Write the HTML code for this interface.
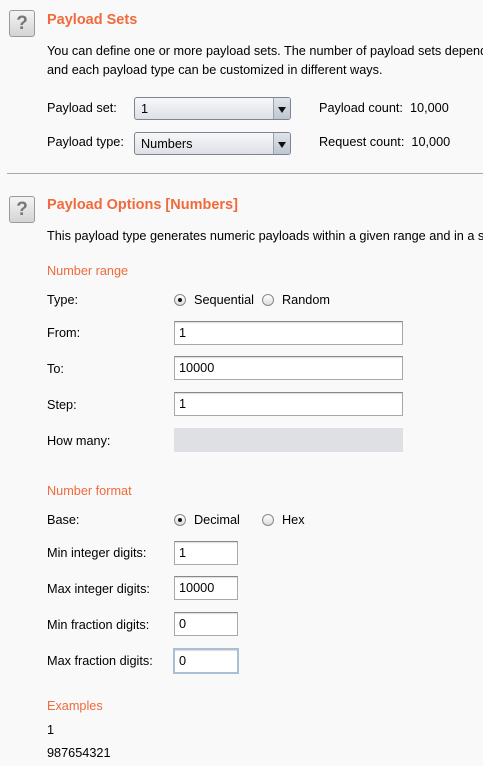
<!DOCTYPE html>
<html><head><style>
body{margin:0;width:483px;height:766px;overflow:hidden;background:#f9f9f9;font-family:"Liberation Sans",sans-serif;font-size:12.7px;color:#000;position:relative}
.a{position:absolute;white-space:nowrap;line-height:15px}
.t{color:#f06a3c;font-weight:bold;font-size:14.5px;line-height:18px}
.o{color:#f06a3c}
.q{position:absolute;left:9px;width:24px;height:25px;border:1px solid #9a9a9a;border-radius:3px;background:linear-gradient(#f4f4f4,#d4d4d4);color:#777;font-weight:bold;font-size:19px;text-align:center;line-height:25px}
.in{position:absolute;left:174px;width:223px;height:22px;border:1px solid #a8a8a8;border-top-color:#888;background:#fff;box-shadow:inset 0 2px 1px -1px #ddd;padding-left:4px;line-height:22px;box-sizing:content-box}
.sm{width:58px}
.sel{position:absolute;left:134px;width:157px;height:23px;border:1px solid #7d8591;border-radius:3px;background:linear-gradient(#f8f8fa,#dde0e6);line-height:22px;padding-left:6px;box-sizing:border-box}
.sel::after{content:"";position:absolute;right:0;top:0;width:16px;height:21px;border-left:1px solid #9aa2ae;background:linear-gradient(#dfe4ea,#bfc6d0);border-radius:0 2px 2px 0}
.sel b{position:absolute;right:4px;top:9px;width:0;height:0;border-left:4px solid transparent;border-right:4px solid transparent;border-top:6px solid #111;z-index:2}
.r{position:absolute;width:12px;height:12px;border:1px solid #888;border-radius:50%;background:linear-gradient(#fff,#dcdcdc);box-sizing:border-box}
.r.on::after{content:"";position:absolute;left:3px;top:3px;width:4px;height:4px;border-radius:50%;background:#111}
</style></head><body>
<div class="q" style="top:10px">?</div>
<div class="a t" style="left:47px;top:11px">Payload Sets</div>
<div class="a" style="left:47px;top:44px">You can define one or more payload sets. The number of payload sets depends</div>
<div class="a" style="left:47px;top:63px">and each payload type can be customized in different ways.</div>
<div class="a" style="left:47px;top:101px">Payload set:</div>
<div class="sel" style="top:97px">1<b></b></div>
<div class="a" style="left:319px;top:101px">Payload count:&nbsp; 10,000</div>
<div class="a" style="left:47px;top:135px">Payload type:</div>
<div class="sel" style="top:132px">Numbers<b></b></div>
<div class="a" style="left:319px;top:135px">Request count:&nbsp; 10,000</div>
<div style="position:absolute;left:7px;right:0;top:173px;height:1px;background:#aaa"></div>
<div class="q" style="top:196px">?</div>
<div class="a t" style="left:47px;top:196px">Payload Options [Numbers]</div>
<div class="a" style="left:47px;top:229px">This payload type generates numeric payloads within a given range and in a specified format.</div>
<div class="a o" style="left:47px;top:264px">Number range</div>
<div class="a" style="left:47px;top:293px">Type:</div>
<div class="r on" style="left:174px;top:294px"></div>
<div class="a" style="left:194px;top:293px">Sequential</div>
<div class="r" style="left:262px;top:294px"></div>
<div class="a" style="left:282px;top:293px">Random</div>
<div class="a" style="left:47px;top:326px">From:</div><div class="in" style="top:321px">1</div>
<div class="a" style="left:47px;top:362px">To:</div><div class="in" style="top:356px">10000</div>
<div class="a" style="left:47px;top:398px">Step:</div><div class="in" style="top:392px">1</div>
<div class="a" style="left:47px;top:434px">How many:</div><div class="in" style="top:428px;background:#dee0e4;border-color:#dee0e4;box-shadow:none"></div>
<div class="a o" style="left:47px;top:484px">Number format</div>
<div class="a" style="left:47px;top:513px">Base:</div>
<div class="r on" style="left:174px;top:514px"></div>
<div class="a" style="left:194px;top:513px">Decimal</div>
<div class="r" style="left:262px;top:514px"></div>
<div class="a" style="left:282px;top:513px">Hex</div>
<div class="a" style="left:47px;top:546px">Min integer digits:</div><div class="in sm" style="top:541px">1</div>
<div class="a" style="left:47px;top:582px">Max integer digits:</div><div class="in sm" style="top:576px">10000</div>
<div class="a" style="left:47px;top:618px">Min fraction digits:</div><div class="in sm" style="top:612px">0</div>
<div class="a" style="left:47px;top:654px">Max fraction digits:</div><div class="in sm" style="top:648px;border:2px solid #a9bfd6;left:173px;height:22px">0</div>
<div class="a o" style="left:47px;top:699px">Examples</div>
<div class="a" style="left:47px;top:723px">1</div>
<div class="a" style="left:47px;top:746px">987654321</div>
</body></html>
